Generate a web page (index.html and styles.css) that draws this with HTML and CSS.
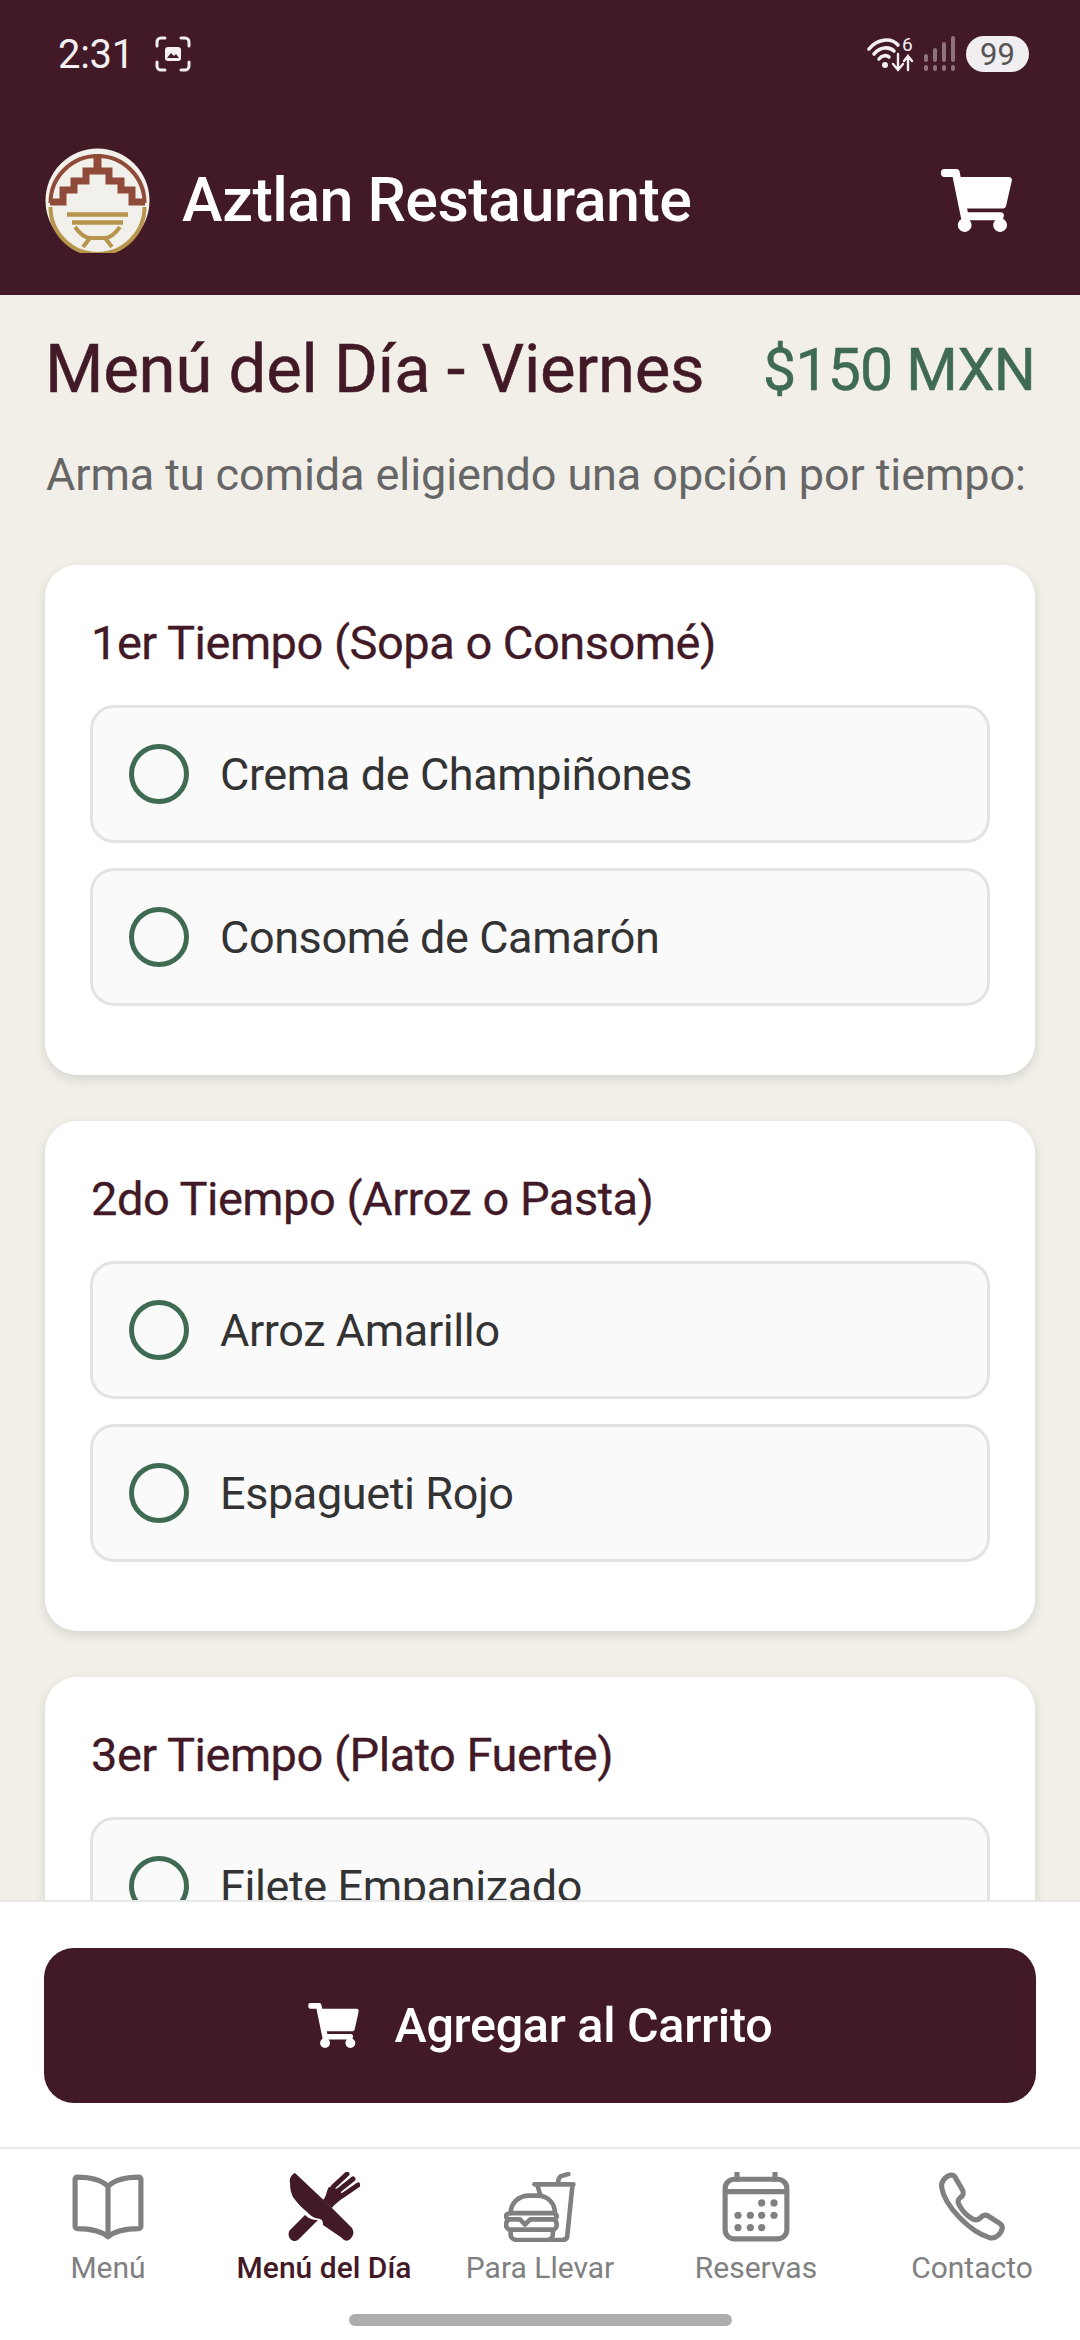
FILE: index.html
```html
<!DOCTYPE html>
<html lang="es">
<head>
  <meta charset="utf-8">
  <title>Aztlan Restaurante</title>
  <link rel="stylesheet" href="styles.css">
</head>
<body>
 <div class="phone">
  <header class="top">
   <div class="status">
    <div class="status-left">
     <span class="time">2:31</span>
     <svg class="shot-icon" viewBox="0 0 36 36" fill="none" stroke="#f4eff1" stroke-width="3" stroke-linecap="round">
      <path d="M2 10V6a4 4 0 0 1 4-4h4M26 2h4a4 4 0 0 1 4 4v4M34 26v4a4 4 0 0 1-4 4h-4M10 34H6a4 4 0 0 1-4-4v-4"/>
      <rect x="10" y="11" width="16" height="14" rx="3" fill="#f4eff1" stroke="none"/>
      <path d="M12 22l4-5 3 3 2-2 3 4z" fill="#421926" stroke="none"/>
     </svg>
    </div>
    <div class="status-right">
     <svg class="wifi-icon" viewBox="0 0 46 36" fill="none" stroke="#f4eff1" stroke-linecap="round">
      <path d="M2 13C10 3 24 1 31 9" stroke-width="3.6"/>
      <path d="M7 18C13 11 22 10 27 15" stroke-width="3.6"/>
      <path d="M12 23C15 19 20 19 22 21" stroke-width="3.6"/>
      <circle cx="18" cy="29" r="3" fill="#f4eff1" stroke="none"/>
      <path d="M31 18v15M26 28l5 6 5-6M41 34V20M37 25l4-5 4 5" stroke-width="2.4"/>
      <text x="35" y="15" class="wifi-six">6</text>
     </svg>
     <svg class="signal-icon" viewBox="0 0 31 36" fill="#f4eff1" opacity="0.42">
      <rect x="0" y="18" width="4" height="8" rx="2"/>
      <rect x="9" y="12" width="4" height="14" rx="2"/>
      <rect x="18" y="6" width="4" height="20" rx="2"/>
      <rect x="27" y="0" width="4" height="26" rx="2"/>
      <rect x="0" y="29" width="4" height="6" rx="2"/>
      <rect x="9" y="29" width="4" height="6" rx="2"/>
      <rect x="18" y="29" width="4" height="6" rx="2"/>
      <rect x="27" y="29" width="4" height="6" rx="2"/>
     </svg>
     <span class="battery">99</span>
    </div>
   </div>
   <div class="appbar">
    <div class="brand">
     <svg class="logo" viewBox="0 0 105 105" fill="none">
      <circle cx="52.5" cy="52.5" r="52" fill="#f2f0ea"/>
      <path d="M5.5 55A47 47 0 0 1 99.5 55" stroke="#8f4a3a" stroke-width="4"/>
      <path d="M5.5 59A47 47 0 0 0 99.5 59" stroke="#b7954c" stroke-width="4"/>
      <path d="M5 54H18V42H29V33H41V23H64V33H76V42H87V54H100" stroke="#8f4a3a" stroke-width="7"/>
      <path d="M52.5 6V23" stroke="#8f4a3a" stroke-width="8"/>
      <path d="M22 66.5H83M27 74.5H78" stroke="#b7954c" stroke-width="4.5"/>
      <path d="M30 79Q38 90 45 90H60Q67 90 75 79M45 90L38 99M60 90L67 99" stroke="#b7954c" stroke-width="4"/>
     </svg>
     <span class="brand-name">Aztlan Restaurante</span>
    </div>
    <svg class="cart-icon cart-top" viewBox="0 0 576 512"><use href="#cart"/></svg>
   </div>
  </header>

  <main class="content">
   <div class="title-row">
    <h1 class="day-title">Menú del Día - Viernes</h1>
    <span class="price">$150 MXN</span>
   </div>
   <p class="intro">Arma tu comida eligiendo una opción por tiempo:</p>

   <section class="course">
    <h2 class="course-name">1er Tiempo (Sopa o Consomé)</h2>
    <div class="option"><span class="radio"></span><span>Crema de Champiñones</span></div>
    <div class="option"><span class="radio"></span><span>Consomé de Camarón</span></div>
   </section>

   <section class="course">
    <h2 class="course-name">2do Tiempo (Arroz o Pasta)</h2>
    <div class="option"><span class="radio"></span><span>Arroz Amarillo</span></div>
    <div class="option"><span class="radio"></span><span>Espagueti Rojo</span></div>
   </section>

   <section class="course">
    <h2 class="course-name">3er Tiempo (Plato Fuerte)</h2>
    <div class="option"><span class="radio"></span><span>Filete Empanizado</span></div>
   </section>
  </main>

  <div class="cart-bar">
   <button class="add-btn">
    <svg class="cart-icon cart-small" viewBox="0 0 576 512"><use href="#cart"/></svg>
    <span>Agregar al Carrito</span>
   </button>
  </div>

  <nav class="tabs">
   <div class="tab">
    <svg class="tab-icon" viewBox="0 0 70 68" fill="none" stroke="currentColor" stroke-width="5" stroke-linejoin="round">
     <path d="M35 14C28 7 15 5 5 5a2 2 0 0 0-2 2V53a2 2 0 0 0 2 2C15 55 27 56 35 63C43 56 55 55 65 55a2 2 0 0 0 2-2V7a2 2 0 0 0-2-2C55 5 42 7 35 14ZM35 14V63"/>
    </svg>
    <span>Menú</span>
   </div>
   <div class="tab active">
    <svg class="tab-icon" viewBox="0 0 72 70" fill="currentColor">
     <path d="M7 1C3 3 1 7 2 11C2 17 3 21 5 25C9 31 14 36 19 40C22 43 25 46 32 47C35 48 35 51 35 53L54 66C57 70 62 70 65 63C66 60 65 58 64 56L44 36Z"/>
     <path d="M17 43L2 58C-1 62 1 68 6 69C8 69.5 10 68 12 66L30 48C25 48 21 47 17 43Z"/>
     <path d="M35 28C39 24 38 19 41 15L50 17L56 24C52 30 48 30 44 36Z"/>
     <path d="M45 15L59 2M50 19L65 7M54 24L70 13" fill="none" stroke="currentColor" stroke-width="5" stroke-linecap="round"/>
    </svg>
    <span>Menú del Día</span>
   </div>
   <div class="tab">
    <svg class="tab-icon" viewBox="0 0 69 68" fill="none" stroke="currentColor" stroke-width="4.5" stroke-linecap="round" stroke-linejoin="round">
     <path d="M62 2L55 4C53 5 52 7 52 12M29 12H67M32 13L35 23M66 13L61 62C61 65 59 66 56 66H46"/>
     <path d="M6 40C6 30 14 23 24 23H32C42 23 49 30 49 40"/>
     <path d="M6 40H47C52 40 52 46 47 46H25L20 51L15 46H6C0 46 0 40 6 40ZM6 46C0 46 0 56 6 56H47C52 56 52 46 47 46"/>
     <path d="M6 57V61C6 64 9 66 12 66H41C44 66 47 64 47 61V57"/>
    </svg>
    <span>Para Llevar</span>
   </div>
   <div class="tab">
    <svg class="tab-icon" viewBox="0 0 65 68" fill="none" stroke="currentColor" stroke-width="5">
     <rect x="2.5" y="7" width="60" height="58" rx="9"/>
     <path d="M2.5 19H62.5"/>
     <path d="M14 1V7M51 1V7" stroke-linecap="round"/>
     <g fill="currentColor" stroke="none">
      <circle cx="38" cy="30" r="3.5"/><circle cx="50" cy="30" r="3.5"/>
      <circle cx="15" cy="42" r="3.5"/><circle cx="27" cy="42" r="3.5"/><circle cx="38" cy="42" r="3.5"/><circle cx="50" cy="42" r="3.5"/>
      <circle cx="15" cy="54" r="3.5"/><circle cx="27" cy="54" r="3.5"/><circle cx="38" cy="54" r="3.5"/>
     </g>
    </svg>
    <span>Reservas</span>
   </div>
   <div class="tab">
    <svg class="tab-icon" viewBox="0 0 65 68" fill="none" stroke="currentColor" stroke-width="5" stroke-linejoin="round">
     <path d="M12 3C7 4 2 9 3 15C6 33 30 58 50 64C56 65 61 60 62 54C62 52 60 50 58 49L47 42C44 41 42 43 40 45C38 47 35 47 32 45C27 42 22 36 20 32C18 28 19 27 21 25C24 23 25 20 23 17L16 5C15 3 14 3 12 3Z"/>
    </svg>
    <span>Contacto</span>
   </div>
  </nav>
  <div class="gesture-area"><div class="gesture"></div></div>
 </div>

 <!-- cart shape used twice -->
 <svg class="defs" width="0" height="0">
  <symbol id="cart" viewBox="0 0 576 512">
   <path fill="currentColor" d="M528.12 301.319l47.273-208C578.806 78.301 567.391 64 551.99 64H159.208l-9.166-44.81C147.758 8.021 137.93 0 126.529 0H24C10.745 0 0 10.745 0 24v16c0 13.255 10.745 24 24 24h69.883l70.248 343.435C147.325 417.1 136 435.222 136 456c0 30.928 25.072 56 56 56s56-25.072 56-56c0-15.674-6.447-29.835-16.824-40h209.647C430.447 426.165 424 440.326 424 456c0 30.928 25.072 56 56 56s56-25.072 56-56c0-22.172-12.888-41.332-31.579-50.405l5.517-24.276c3.413-15.018-8.002-29.319-23.403-29.319H218.117l-6.545-32h293.145c11.206 0 20.92-7.754 23.403-18.681z"/>
  </symbol>
 </svg>
</body>
</html>
```

FILE: styles.css
```css
* {
  box-sizing: border-box;
}
body {
  margin: 0;
  background-color: #f1efe8;
  font-family: "Roboto", "Noto Sans", sans-serif;
  color: #333;
}
.defs {
  position: absolute;
}
.phone {
  width: 1080px;
  height: 2340px;
  display: flex;
  flex-direction: column;
  overflow: hidden;
}

/* header */
.top {
  height: 295px;
  flex: none;
  background-color: #421926;
  color: #fff;
  position: relative;
  z-index: 2;
}
.status {
  height: 105px;
  padding: 3px 51px 0 58px;
  display: flex;
  align-items: center;
  justify-content: space-between;
}
.status-left {
  display: flex;
  align-items: center;
  gap: 21px;
}
.time {
  font-size: 40px;
  color: #f4eff1;
  letter-spacing: -0.3px;
}
.shot-icon {
  width: 36px;
  height: 36px;
}
.status-right {
  display: flex;
  align-items: center;
  gap: 11px;
}
.wifi-icon {
  width: 46px;
  height: 36px;
  overflow: visible;
}
.wifi-six {
  font-size: 19px;
  fill: #f4eff1;
  stroke: none;
}
.signal-icon {
  width: 31px;
  height: 36px;
}
.battery {
  width: 63px;
  height: 36px;
  border-radius: 18px;
  background-color: #f0eef0;
  color: #555;
  font-size: 31px;
  display: flex;
  align-items: center;
  justify-content: center;
}
.appbar {
  height: 190px;
  padding: 0 68px 0 45px;
  display: flex;
  align-items: center;
  justify-content: space-between;
}
.brand {
  display: flex;
  align-items: center;
  gap: 32px;
}
.logo {
  width: 105px;
  height: 105px;
}
.brand-name {
  font-size: 61px;
  font-weight: 500;
  letter-spacing: -0.55px;
}
.cart-icon {
  color: #fff;
}
.cart-top {
  width: 71px;
  height: 63px;
}

/* scrolling part */
.content {
  flex: 1;
  min-height: 0;
  overflow: hidden;
  padding: 36px 45px 0;
}
.title-row {
  display: flex;
  align-items: center;
  justify-content: space-between;
  height: 76px;
}
.day-title {
  margin: 0;
  font-size: 67px;
  font-weight: 400;
  color: #421926;
  letter-spacing: -0.2px;
  -webkit-text-stroke: 0.5px #421926;
}
.price {
  font-size: 59px;
  font-weight: 400;
  color: #3f6b52;
  letter-spacing: -0.8px;
  -webkit-text-stroke: 0.5px #3f6b52;
}
.intro {
  margin: 0 0 64px;
  padding: 42px 0 0 1px;
  font-size: 45px;
  line-height: 52px;
  color: #666;
  letter-spacing: -0.1px;
}
.course {
  background-color: #fff;
  border-radius: 32px;
  padding: 51px 45px 0;
  margin-bottom: 46px;
  height: 510px;
  box-shadow: 0 4px 12px rgba(0, 0, 0, 0.12);
}
.course-name {
  margin: 0 0 35px;
  font-size: 47px;
  line-height: 54px;
  font-weight: 400;
  color: #421926;
  letter-spacing: -0.5px;
  padding-left: 1px;
  -webkit-text-stroke: 0.3px #421926;
}
.option {
  height: 138px;
  margin-bottom: 25px;
  padding-left: 36px;
  border: 3px solid #e3e3e3;
  border-radius: 24px;
  background-color: #fafafa;
  display: flex;
  align-items: center;
  gap: 31px;
  font-size: 45px;
  color: #333;
  letter-spacing: -0.4px;
}
.radio {
  width: 60px;
  height: 60px;
  flex: none;
  border: 5.5px solid #3f6b52;
  border-radius: 50%;
}

/* add to cart */
.cart-bar {
  flex: none;
  height: 247px;
  padding: 46px 44px 0;
  background-color: #fff;
  border-top: 2px solid #e8e8e8;
  position: relative;
  z-index: 2;
}
.add-btn {
  width: 100%;
  height: 155px;
  border: 0;
  border-radius: 30px;
  background-color: #421926;
  color: #fff;
  font-family: inherit;
  font-size: 48.5px;
  font-weight: 500;
  letter-spacing: -0.3px;
  display: flex;
  align-items: center;
  justify-content: center;
  gap: 36px;
}
.cart-small {
  width: 51px;
  height: 45px;
}

/* bottom nav */
.tabs {
  flex: none;
  height: 148px;
  padding-top: 23px;
  background-color: #fff;
  border-top: 2px solid #e8e8e8;
  display: grid;
  grid-template-columns: repeat(5, 216px);
}
.tab {
  display: flex;
  flex-direction: column;
  align-items: center;
  gap: 8px;
  font-size: 30px;
  color: #808080;
}
.tab-icon {
  height: 70px;
  width: 72px;
}
.tab.active {
  color: #421926;
  font-weight: 500;
}
.gesture-area {
  flex: none;
  height: 45px;
  background-color: #fff;
  padding-top: 19px;
}
.gesture {
  width: 383px;
  height: 12px;
  margin: 0 auto;
  border-radius: 6px;
  background-color: #adadad;
}
```
